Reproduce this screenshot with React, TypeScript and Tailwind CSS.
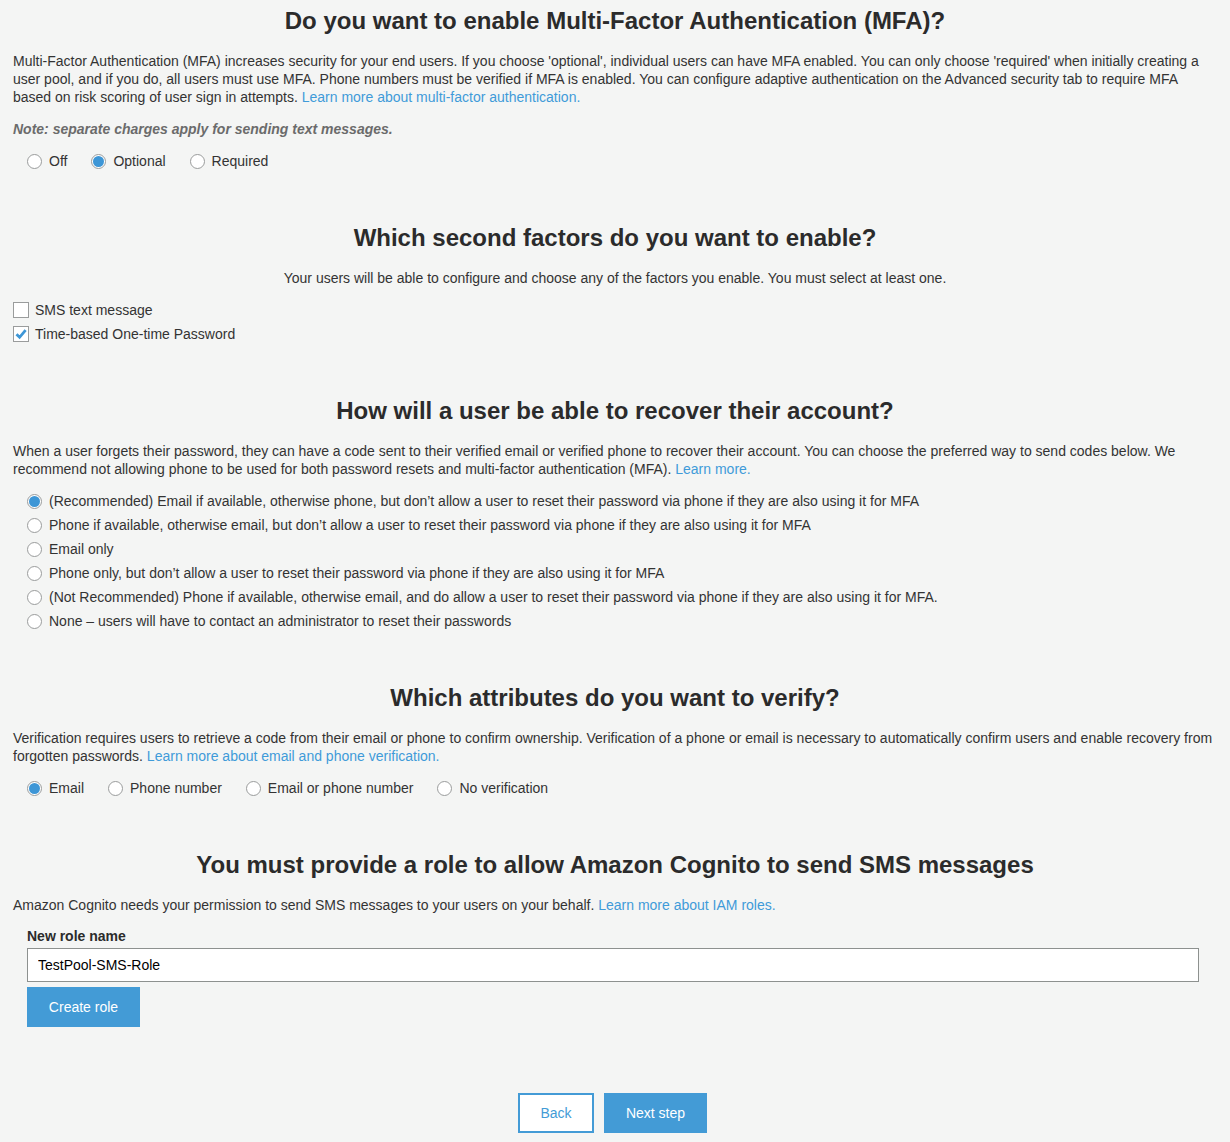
import React, { useState } from 'react';

const FONT = { fontFamily: '"Liberation Sans", Arial, sans-serif' };

function Radio({ checked, label, onClick }: { checked: boolean; label: string; onClick: () => void }) {
  return (
    <label className="flex items-center gap-[7px] h-6 cursor-pointer" onClick={onClick}>
      <span className="w-[15px] h-[15px] rounded-full border border-[#9a9c9c] bg-white flex items-center justify-center shrink-0">
        {checked && <span className="w-[11px] h-[11px] rounded-full bg-[#3d96d6]" />}
      </span>
      <span>{label}</span>
    </label>
  );
}

function Check({ checked, label, onClick }: { checked: boolean; label: string; onClick: () => void }) {
  return (
    <label className="flex items-center gap-[6px] h-6 cursor-pointer" onClick={onClick}>
      <span className="w-[16px] h-[16px] border border-[#9a9c9c] bg-white flex items-center justify-center shrink-0">
        {checked && (
          <svg width="12" height="12" viewBox="0 0 12 12">
            <path d="M1.5 6.2 L4.6 9.3 L10.6 2.2" fill="none" stroke="#3d96d6" strokeWidth="2.8" />
          </svg>
        )}
      </span>
      <span>{label}</span>
    </label>
  );
}

function Heading({ children }: { children: React.ReactNode }) {
  return <h2 className="text-center text-[24px] leading-[28px] font-bold text-[#2b2b2b]">{children}</h2>;
}

const recovery = [
  '(Recommended) Email if available, otherwise phone, but don\u2019t allow a user to reset their password via phone if they are also using it for MFA',
  'Phone if available, otherwise email, but don\u2019t allow a user to reset their password via phone if they are also using it for MFA',
  'Email only',
  'Phone only, but don\u2019t allow a user to reset their password via phone if they are also using it for MFA',
  '(Not Recommended) Phone if available, otherwise email, and do allow a user to reset their password via phone if they are also using it for MFA.',
  'None \u2013 users will have to contact an administrator to reset their passwords',
];

export default function App() {
  const [mfa, setMfa] = useState('Optional');
  const [sms, setSms] = useState(false);
  const [totp, setTotp] = useState(true);
  const [rec, setRec] = useState(0);
  const [verify, setVerify] = useState('Email');
  const [role, setRole] = useState('TestPool-SMS-Role');

  return (
    <div style={FONT} className="min-h-screen bg-[#f4f5f4] text-[#333] text-[14px] leading-[18px] px-[13px] pt-[7px] pb-[9px]">
      <Heading>Do you want to enable Multi-Factor Authentication (MFA)?</Heading>
      <p className="mt-[17px]">
        Multi-Factor Authentication (MFA) increases security for your end users. If you choose 'optional', individual users can have MFA enabled. You can only choose 'required' when initially creating a user pool, and if you do, all users must use MFA. Phone numbers must be verified if MFA is enabled. You can configure adaptive authentication on the Advanced security tab to require MFA based on risk scoring of user sign in attempts.{' '}
        <a className="text-[#3f9bd9]">Learn more about multi-factor authentication.</a>
      </p>
      <p className="mt-[14px] italic font-bold text-[#6b6b6b]">Note: separate charges apply for sending text messages.</p>
      <div className="mt-[11px] pl-[14px] flex gap-[24px]">
        {['Off', 'Optional', 'Required'].map((o) => (
          <Radio key={o} label={o} checked={mfa === o} onClick={() => setMfa(o)} />
        ))}
      </div>

      <div className="mt-[51px]">
        <Heading>Which second factors do you want to enable?</Heading>
      </div>
      <p className="mt-[17px] text-center">Your users will be able to configure and choose any of the factors you enable. You must select at least one.</p>
      <div className="mt-[11px] flex flex-col">
        <Check label="SMS text message" checked={sms} onClick={() => setSms(!sms)} />
        <Check label="Time-based One-time Password" checked={totp} onClick={() => setTotp(!totp)} />
      </div>

      <div className="mt-[51px]">
        <Heading>How will a user be able to recover their account?</Heading>
      </div>
      <p className="mt-[17px]">
        When a user forgets their password, they can have a code sent to their verified email or verified phone to recover their account. You can choose the preferred way to send codes below. We recommend not allowing phone to be used for both password resets and multi-factor authentication (MFA).{' '}
        <a className="text-[#3f9bd9]">Learn more.</a>
      </p>
      <div className="mt-[11px] pl-[14px] flex flex-col">
        {recovery.map((r, i) => (
          <Radio key={i} label={r} checked={rec === i} onClick={() => setRec(i)} />
        ))}
      </div>

      <div className="mt-[51px]">
        <Heading>Which attributes do you want to verify?</Heading>
      </div>
      <p className="mt-[17px]">
        Verification requires users to retrieve a code from their email or phone to confirm ownership. Verification of a phone or email is necessary to automatically confirm users and enable recovery from forgotten passwords.{' '}
        <a className="text-[#3f9bd9]">Learn more about email and phone verification.</a>
      </p>
      <div className="mt-[11px] pl-[14px] flex gap-[24px]">
        {['Email', 'Phone number', 'Email or phone number', 'No verification'].map((o) => (
          <Radio key={o} label={o} checked={verify === o} onClick={() => setVerify(o)} />
        ))}
      </div>

      <div className="mt-[51px]">
        <Heading>You must provide a role to allow Amazon Cognito to send SMS messages</Heading>
      </div>
      <p className="mt-[17px]">
        Amazon Cognito needs your permission to send SMS messages to your users on your behalf.{' '}
        <a className="text-[#3f9bd9]">Learn more about IAM roles.</a>
      </p>
      <div className="mt-[13px] pl-[14px] pr-[18px]">
        <div className="font-bold text-[#2b2b2b]">New role name</div>
        <input
          value={role}
          onChange={(e) => setRole(e.target.value)}
          className="mt-[3px] block w-full h-[34px] bg-white border border-[#8d918f] px-[10px] text-[14px] text-black outline-none"
        />
        <button className="mt-[5px] h-[40px] w-[113px] bg-[#439bd6] text-white text-[14px]">Create role</button>
      </div>

      <div className="mt-[66px] flex justify-center gap-[10px] pr-[5px]">
        <button className="h-[40px] w-[76px] bg-white border-2 border-[#439bd6] text-[#439bd6] text-[14px]">Back</button>
        <button className="h-[40px] w-[103px] bg-[#439bd6] text-white text-[14px]">Next step</button>
      </div>
    </div>
  );
}
